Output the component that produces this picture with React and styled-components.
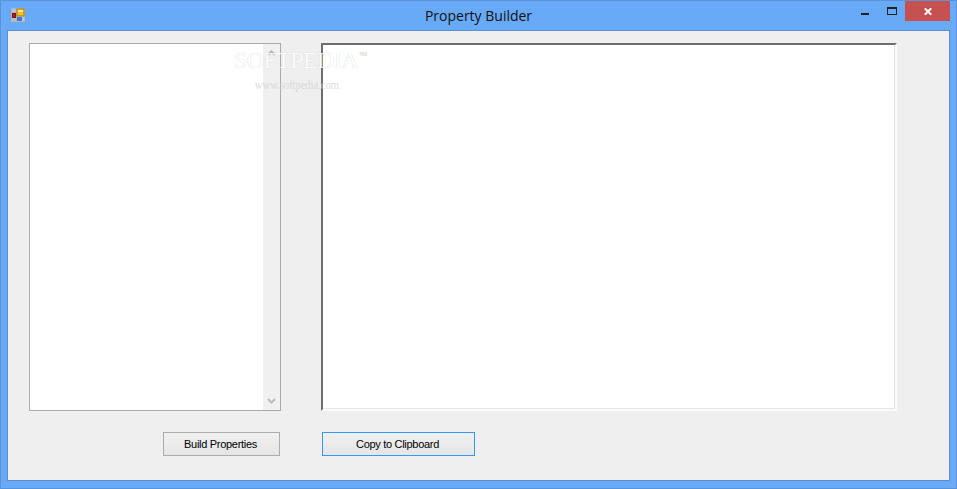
import React from "react";
import styled, { createGlobalStyle } from "styled-components";

const Global = createGlobalStyle`
  html, body { margin: 0; padding: 0; width: 957px; height: 489px; overflow: hidden; background: #69aaf8; }
  #root { width: 957px; height: 489px; }
  * { box-sizing: border-box; }
`;
const Win = styled.div`
  width: 957px; height: 489px; display: flex; flex-direction: column;
  background: #69aaf8; border: 1px solid #5b93d9;
  padding: 0 6px 7px 6px; position: relative;
`;
const TitleBar = styled.div`
  height: 29px; flex: none; display: flex; align-items: flex-start; position: relative; margin: 0 -6px;
`;
const AppIcon = styled.svg`
  width: 14px; height: 14px; margin: 7px 0 0 10px; flex: none;
`;
const Title = styled.div`
  position: absolute; left: 0; right: 0; top: 5px; text-align: center;
  font: 14px/20px "Open Sans", "Noto Sans", sans-serif; color: #111;
`;
const Controls = styled.div`
  margin-left: auto; display: flex; align-items: flex-start; margin-right: 6px;
`;
const Ctl = styled.div`
  width: 27px; height: 20px; display: flex; align-items: center; justify-content: center;
`;
const CloseBtn = styled.div`
  width: 45px; height: 20px; background: #c75050; display: flex; align-items: center; justify-content: center;
`;
const Client = styled.div`
  flex: 1; background: #efefef; border: 1px solid #5a8fd0; border-right-color: #5e8cc4; border-bottom-color: #5e8cc4;
  padding: 12px 52px 0 21px; display: flex; flex-direction: column; position: relative;
`;
const Panes = styled.div`
  display: flex; gap: 40px; height: 368px; flex: none;
`;
const ListBox = styled.div`
  width: 252px; height: 368px; background: #fff; border: 1px solid #ababab; display: flex; justify-content: flex-end;
`;
const Scroll = styled.div`
  width: 17px; background: #f0f0f0; display: flex; flex-direction: column; justify-content: space-between; align-items: center; padding: 6px 0;
`;
const TextArea = styled.div`
  width: 576px; height: 368px; background: #fff;
  border-style: solid; border-width: 2px; border-color: #6d6d6d #fafafa #fafafa #6d6d6d;
  box-shadow: inset -1px -1px 0 #e6e6e6;
`;
const Buttons = styled.div`
  display: flex; margin-top: 21px; padding-left: 134px; gap: 42px;
`;
const Btn = styled.div`
  width: ${p => p.$w}px; height: 24px; padding-right: 2px;
  display: flex; align-items: center; justify-content: center;
  background: linear-gradient(#f0f0f0, #e5e5e5);
  border: 1px solid ${p => (p.$focus ? "#3399ff" : "#acacac")};
  font: 11px "Liberation Sans", Arial, sans-serif; letter-spacing: -0.3px; color: #000;
`;
const Mark = styled.div`
  position: absolute; left: 226px; top: 15px; color: #fff; pointer-events: none;
  font-family: "Liberation Serif", serif; opacity: .8;
`;
const MarkName = styled.div`
  font-size: 24px; line-height: 28px; letter-spacing: -0.6px; white-space: nowrap; text-shadow: 0 0 1px #c0c0c0;
`;
const MarkUrl = styled.div`
  font-size: 12.5px; line-height: 14px; margin: 4px 0 0 21px; color: #d4d4d4; white-space: nowrap; transform: scaleX(.84); transform-origin: left;
`;
const Tm = styled.sup`
  font: 6px "Liberation Sans", sans-serif; vertical-align: 12px; margin-left: 1px; color: #ddd;
`;

export default function App() {
  return (
    <Win>
      <Global />
      <TitleBar>
        <AppIcon viewBox="0 0 14 14">
          <rect x="0.5" y="0.5" width="13" height="13" fill="#a9c8f0" stroke="#b5b5a8" />
          <path d="M0 4.5 H5 M5.5 0 V14 M0 11.5 H5" stroke="#b5b5a8" />
          <rect x="6" y="1" width="7" height="7" fill="#f3c21f" stroke="#a87f14" />
          <rect x="7" y="2" width="5" height="2" fill="#ffe98a" />
          <rect x="1.5" y="5.5" width="3" height="4" fill="#c4161c" stroke="#7e1212" />
          <rect x="6" y="9" width="5" height="4" fill="#3f78d8" />
        </AppIcon>
        <Title>Property Builder</Title>
        <Controls>
          <Ctl>
            <svg width="8" height="8" viewBox="0 0 8 8" style={{ marginTop: 2 }}><rect y="5" width="8" height="2" fill="#222" /></svg>
          </Ctl>
          <Ctl>
            <svg width="10" height="8" viewBox="0 0 10 8"><rect x=".5" y=".5" width="9" height="7" fill="none" stroke="#222" /><rect y="0" width="10" height="2" fill="#222" /></svg>
          </Ctl>
          <CloseBtn>
            <svg width="8" height="7" viewBox="0 0 8 7"><path d="M.8 0.3 L7.2 6.7 M7.2 0.3 L.8 6.7" stroke="#fff" strokeWidth="2" /></svg>
          </CloseBtn>
        </Controls>
      </TitleBar>
      <Client>
        <Panes>
          <ListBox>
            <Scroll>
              <svg width="9" height="7" viewBox="0 0 9 7"><path d="M1 5 L4.5 1.5 L8 5" fill="none" stroke="#b4b4b4" strokeWidth="2" /></svg>
              <svg width="9" height="7" viewBox="0 0 9 7"><path d="M1 2 L4.5 5.5 L8 2" fill="none" stroke="#bcbcbc" strokeWidth="2" /></svg>
            </Scroll>
          </ListBox>
          <TextArea />
        </Panes>
        <Buttons>
          <Btn $w={117}>Build Properties</Btn>
          <Btn $w={153} $focus>Copy to Clipboard</Btn>
        </Buttons>
        <Mark>
          <MarkName>SOFTPEDIA<Tm>TM</Tm></MarkName>
          <MarkUrl>www.softpedia.com</MarkUrl>
        </Mark>
      </Client>
    </Win>
  );
}
